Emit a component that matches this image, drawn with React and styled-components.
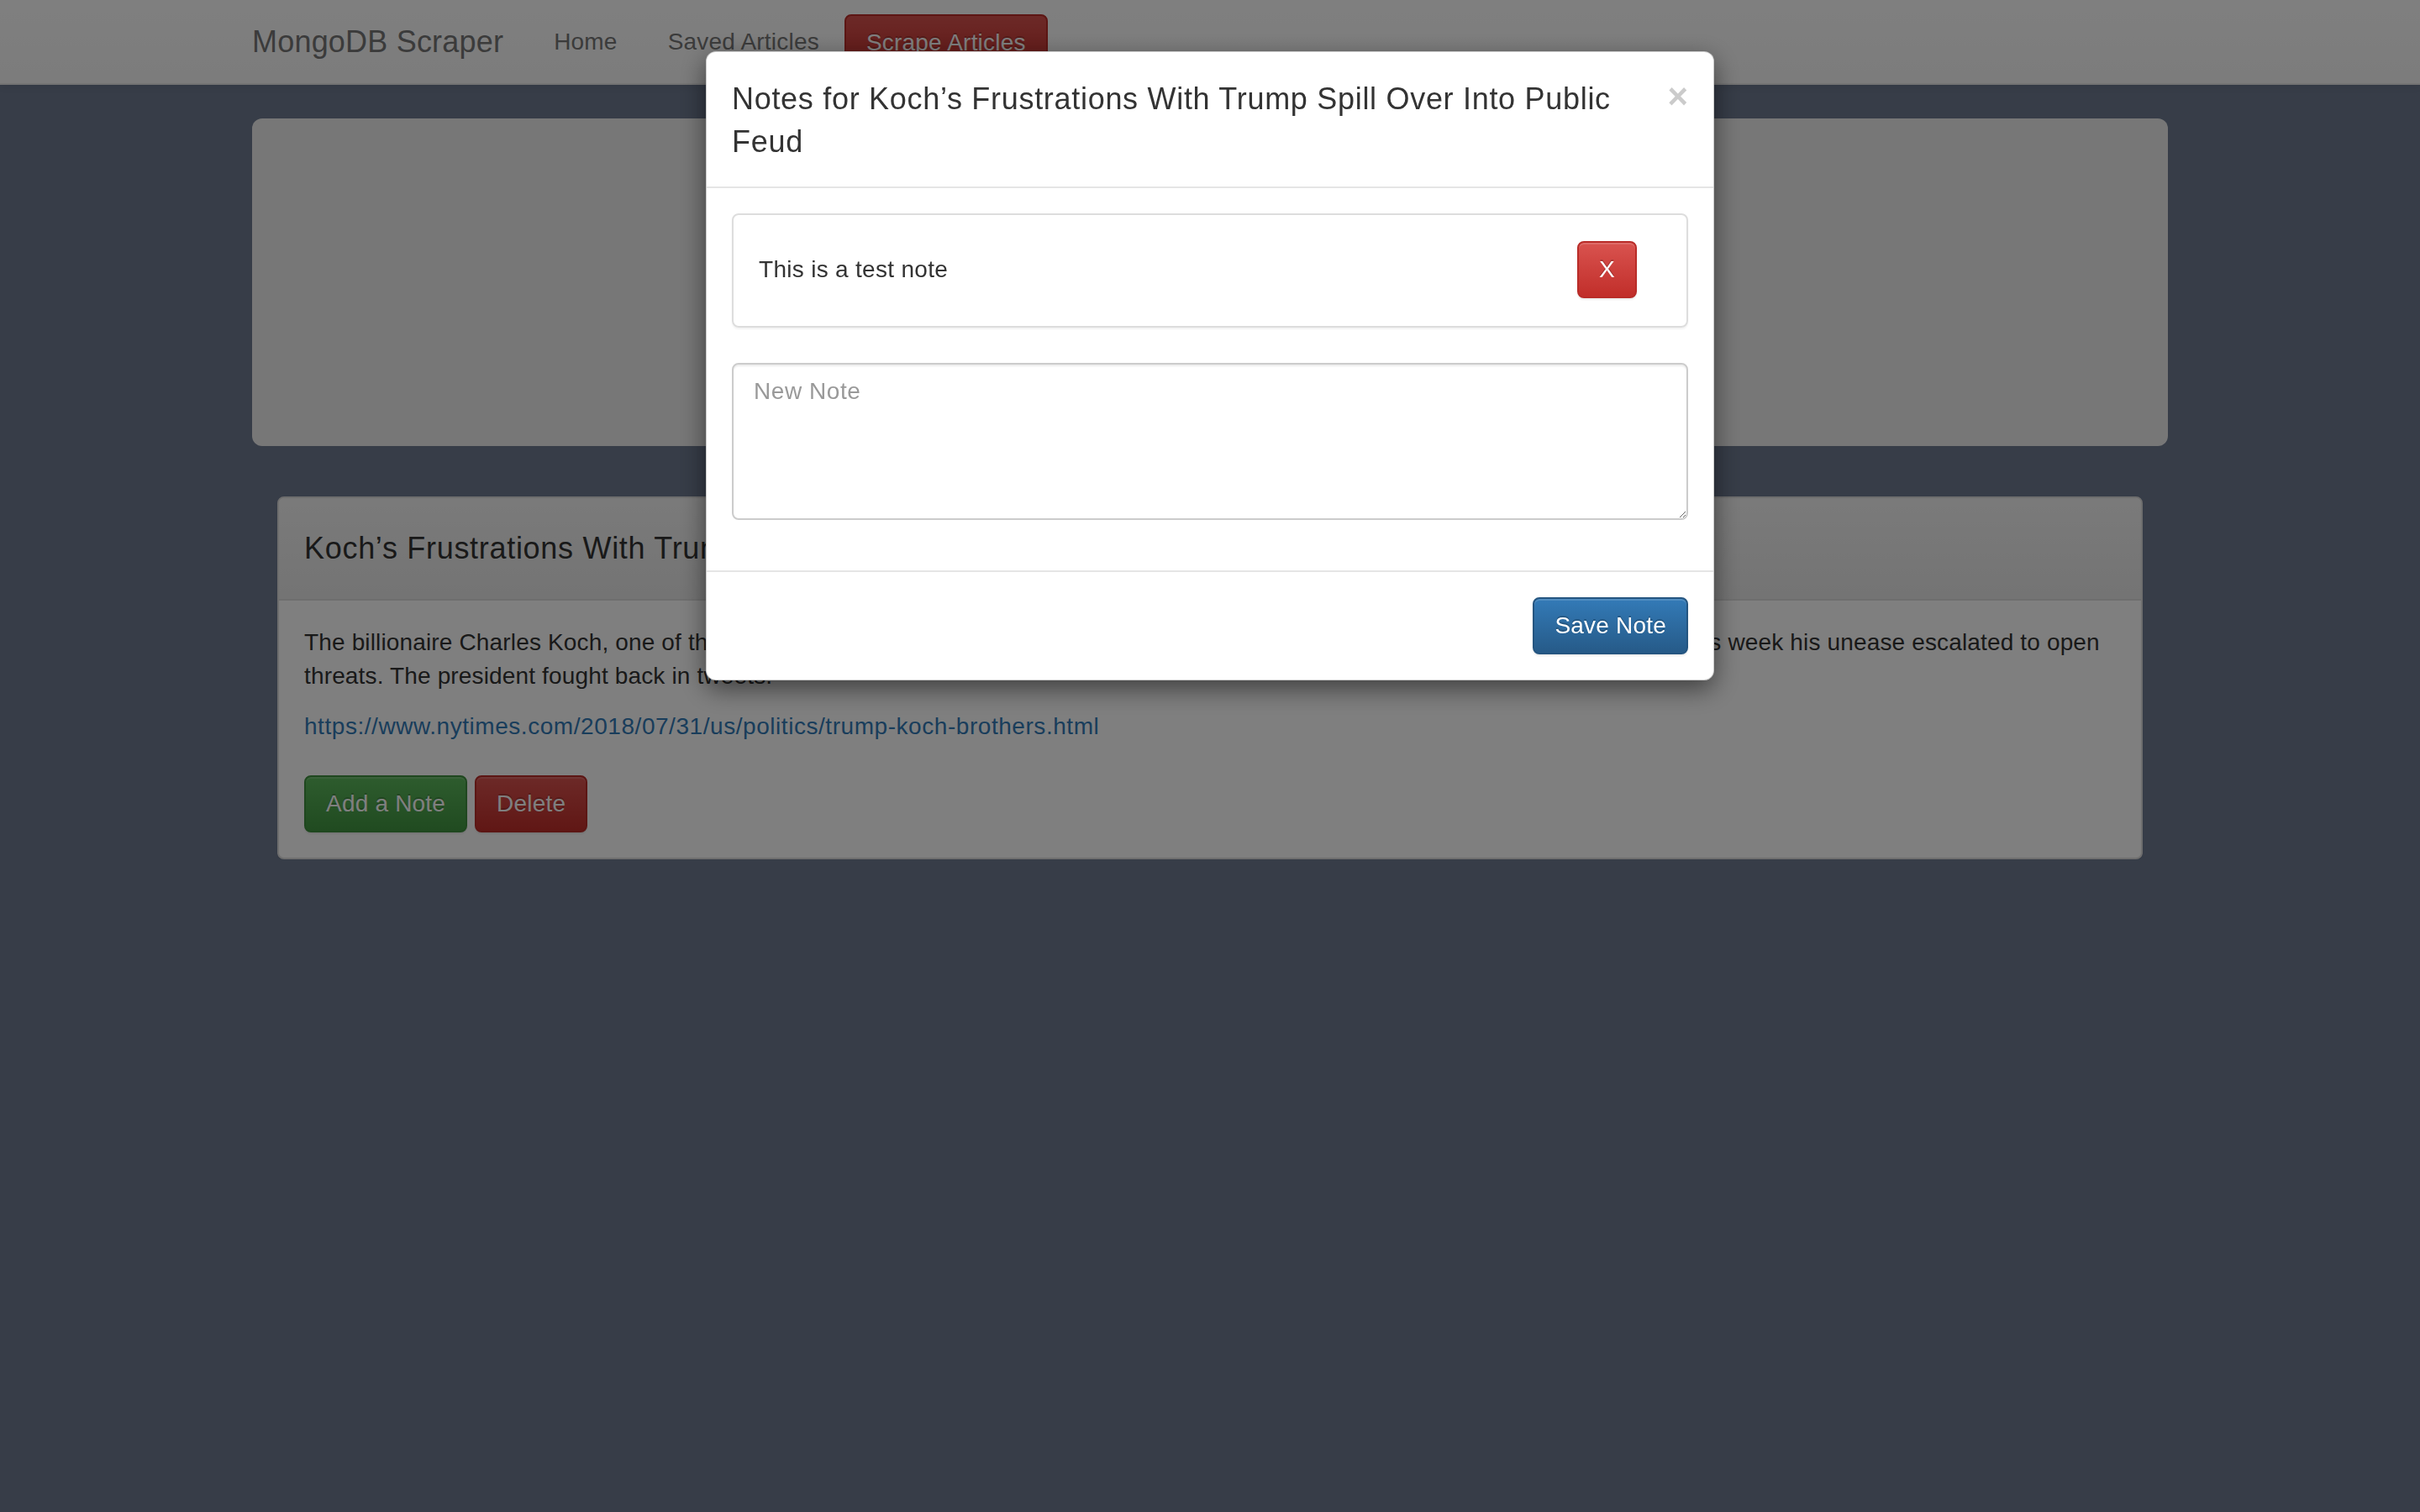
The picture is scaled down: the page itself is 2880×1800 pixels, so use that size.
import styled, { createGlobalStyle } from 'styled-components';

const GlobalStyle = createGlobalStyle`
    * {
        box-sizing: border-box;
    }

    body {
        margin: 0;
        background-color: #6e7a90;
        font-family: "Liberation Sans", Arial, sans-serif;
        font-size: 28px;
        line-height: 40px;
        letter-spacing: 0.55px;
        color: #333333;
    }
`;

const article = {
    title: 'Koch’s Frustrations With Trump Spill Over Into Public Feud',
    summary:
        'The billionaire Charles Koch, one of the most powerful donors in Republican politics, has long been at odds with President Trump. This week his unease escalated to open threats. The president fought back in tweets.',
    link: 'https://www.nytimes.com/2018/07/31/us/politics/trump-koch-brothers.html',
};

const notes = [{ id: 1, body: 'This is a test note' }];

const App = () => {
    return (
        <>
            <GlobalStyle />
            <Navbar>
                <NavInner>
                    <Brand href="#">MongoDB Scraper</Brand>
                    <NavList>
                        <li><NavLink href="#">Home</NavLink></li>
                        <li><NavLink href="#">Saved Articles</NavLink></li>
                        <li><ScrapeButton href="#">Scrape Articles</ScrapeButton></li>
                    </NavList>
                </NavInner>
            </Navbar>

            <Container>
                <Jumbotron>
                    <JumboTitle>Mongo Scraper</JumboTitle>
                    <JumboText>Saved Articles</JumboText>
                </Jumbotron>

                <ArticleList>
                    <Panel>
                        <PanelHeading>
                            <PanelTitle>{article.title}</PanelTitle>
                        </PanelHeading>
                        <PanelBody>
                            <Summary>{article.summary}</Summary>
                            <LinkLine>
                                <ArticleLink href="#">{article.link}</ArticleLink>
                            </LinkLine>
                            <ButtonRow>
                                <Btn variant="success">Add a Note</Btn>
                                <Btn variant="danger">Delete</Btn>
                            </ButtonRow>
                        </PanelBody>
                    </Panel>
                </ArticleList>
            </Container>

            <Backdrop />
            <ModalWrap>
                <ModalContent>
                    <ModalHeader>
                        <CloseButton>×</CloseButton>
                        <ModalTitle>Notes for {article.title}</ModalTitle>
                    </ModalHeader>
                    <ModalBody>
                        {notes.map((note) => (
                            <NoteItem key={note.id}>
                                <NoteText>{note.body}</NoteText>
                                <Btn variant="danger">X</Btn>
                            </NoteItem>
                        ))}
                        <NoteInput placeholder="New Note" rows={4} />
                    </ModalBody>
                    <ModalFooter>
                        <Btn variant="primary">Save Note</Btn>
                    </ModalFooter>
                </ModalContent>
            </ModalWrap>
        </>
    );
};

export default App;

const gradients = {
    success: { top: '#5cb85c', bottom: '#419641', border: '#3e8f3e' },
    danger: { top: '#d9534f', bottom: '#c12e2a', border: '#b92c28' },
    primary: { top: '#337ab7', bottom: '#265a88', border: '#245580' },
};

const Navbar = styled.nav`
    height: 101px;
    background-image: linear-gradient(to bottom, #ffffff 0%, #f8f8f8 100%);
    border-bottom: 2px solid #e7e7e7;
    box-shadow: inset 0 2px 0 rgba(255, 255, 255, 0.15), 0 2px 10px rgba(0, 0, 0, 0.075);
    margin-bottom: 40px;
`;

const NavInner = styled.div`
    width: 2340px;
    margin: 0 auto;
    padding: 0 30px;
    display: flex;
    align-items: flex-start;
`;

const Brand = styled.a`
    display: block;
    margin-left: -30px;
    padding: 30px;
    font-size: 36px;
    line-height: 40px;
    letter-spacing: 0.2px;
    color: #777777;
    text-decoration: none;
`;

const NavList = styled.ul`
    display: flex;
    list-style: none;
    margin: 0;
    padding: 0;
`;

const NavLink = styled.a`
    display: block;
    padding: 30px;
    font-size: 28px;
    line-height: 40px;
    letter-spacing: 0.2px;
    color: #777777;
    text-decoration: none;
`;

const ScrapeButton = styled.a`
    display: block;
    margin-top: 17px;
    padding: 12px 24px;
    font-size: 28px;
    line-height: 40px;
    letter-spacing: 0.2px;
    color: #ffffff;
    text-decoration: none;
    border: 2px solid #b92c28;
    border-radius: 8px;
    background-image: linear-gradient(to bottom, #d9534f 0%, #c12e2a 100%);
    text-shadow: 0 -2px 0 rgba(0, 0, 0, 0.2);
`;

const Container = styled.div`
    width: 2340px;
    margin: 0 auto;
    padding: 0 30px;
`;

const Jumbotron = styled.div`
    height: 390px;
    margin-bottom: 60px;
    padding: 96px 120px;
    background-color: #eeeeee;
    border-radius: 12px;
    text-align: center;
`;

const JumboTitle = styled.h1`
    margin: 0 0 20px;
    font-size: 100px;
    line-height: 110px;
    font-weight: 500;
`;

const JumboText = styled.p`
    margin: 0;
    font-size: 42px;
    line-height: 60px;
`;

const ArticleList = styled.div`
    padding: 0 30px;
`;

const Panel = styled.div`
    background-color: #ffffff;
    border: 2px solid #dddddd;
    border-radius: 8px;
    box-shadow: 0 2px 2px rgba(0, 0, 0, 0.05);
    overflow: hidden;
`;

const PanelHeading = styled.div`
    padding: 20px 30px;
    background-image: linear-gradient(to bottom, #f5f5f5 0%, #e8e8e8 100%);
    border-bottom: 2px solid #dddddd;
`;

const PanelTitle = styled.h3`
    margin: 20px 0;
    font-size: 36px;
    line-height: 40px;
    font-weight: 500;
    letter-spacing: 0.7px;
    color: #333333;
`;

const PanelBody = styled.div`
    padding: 30px;
`;

const Summary = styled.p`
    margin: 0 0 20px;
    letter-spacing: 0.15px;
`;

const LinkLine = styled.p`
    margin: 0 0 38px;
`;

const ArticleLink = styled.a`
    color: #337ab7;
    text-decoration: none;
`;

const ButtonRow = styled.div`
    display: flex;
    gap: 9px;
`;

const Btn = styled.button`
    height: 68px;
    padding: 12px 24px;
    font-family: "Liberation Sans", Arial, sans-serif;
    font-size: 28px;
    line-height: 40px;
    letter-spacing: 0.2px;
    color: #ffffff;
    border: 2px solid ${(props) => gradients[props.variant].border};
    border-radius: 8px;
    background-image: linear-gradient(
        to bottom,
        ${(props) => gradients[props.variant].top} 0%,
        ${(props) => gradients[props.variant].bottom} 100%
    );
    text-shadow: 0 -2px 0 rgba(0, 0, 0, 0.2);
    box-shadow: inset 0 2px 0 rgba(255, 255, 255, 0.15), 0 2px 2px rgba(0, 0, 0, 0.075);
    cursor: pointer;
`;

const Backdrop = styled.div`
    position: fixed;
    inset: 0;
    background-color: rgba(0, 0, 0, 0.5);
`;

const ModalWrap = styled.div`
    position: fixed;
    inset: 0;
    display: flex;
    justify-content: center;
    align-items: flex-start;
    padding-top: 61px;
`;

const ModalContent = styled.div`
    width: 1200px;
    background-color: #ffffff;
    border: 1px solid rgba(0, 0, 0, 0.2);
    border-radius: 12px;
    box-shadow: 0 10px 30px rgba(0, 0, 0, 0.5);
`;

const ModalHeader = styled.div`
    padding: 30px 30px 28px;
    border-bottom: 2px solid #e5e5e5;
`;

const CloseButton = styled.button`
    float: right;
    margin-top: 2px;
    padding: 0;
    border: 0;
    background: transparent;
    font-family: "Liberation Sans", Arial, sans-serif;
    font-size: 42px;
    font-weight: 700;
    line-height: 42px;
    color: #000000;
    opacity: 0.2;
    cursor: pointer;
`;

const ModalTitle = styled.h4`
    margin: 0;
    font-size: 36px;
    line-height: 51px;
    font-weight: 500;
    letter-spacing: 0.7px;
    color: #333333;
`;

const ModalBody = styled.div`
    padding: 30px;
`;

const NoteItem = styled.div`
    display: flex;
    align-items: center;
    justify-content: space-between;
    margin-bottom: 42px;
    padding: 31px 59px 33px 30px;
    border: 2px solid #dddddd;
    border-radius: 8px;
    box-shadow: 0 2px 2px rgba(0, 0, 0, 0.05);
`;

const NoteText = styled.span`
    font-size: 28px;
    line-height: 40px;
    letter-spacing: 0.3px;
    color: #333333;
`;

const NoteInput = styled.textarea`
    display: block;
    width: 100%;
    height: 187px;
    margin-bottom: 30px;
    padding: 12px 24px;
    font-family: "Liberation Sans", Arial, sans-serif;
    font-size: 28px;
    line-height: 40px;
    letter-spacing: 0.55px;
    color: #555555;
    border: 2px solid #cccccc;
    border-radius: 8px;
    box-shadow: inset 0 2px 2px rgba(0, 0, 0, 0.075);

    &::placeholder {
        color: #999999;
    }
`;

const ModalFooter = styled.div`
    display: flex;
    justify-content: flex-end;
    padding: 30px;
    border-top: 2px solid #e5e5e5;
`;
